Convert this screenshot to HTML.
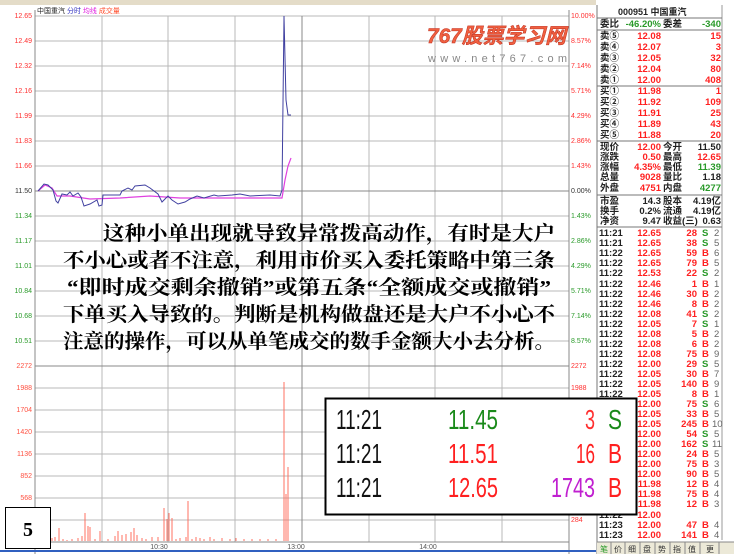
<!DOCTYPE html>
<html><head><meta charset="utf-8"><style>
html,body{margin:0;padding:0;background:#fff;}
svg{display:block;}
.l{font-family:"Liberation Sans",sans-serif;font-size:7px;}
.p{font-family:"Liberation Sans","Noto Sans CJK SC",sans-serif;font-size:9.5px;font-weight:bold;}
.c{font-family:"Liberation Serif","Noto Serif CJK SC",serif;font-size:20px;font-weight:bold;}
.b{font-family:"Liberation Sans Narrow","Liberation Sans",sans-serif;font-size:28px;}
</style></head><body>
<svg width="734" height="554" viewBox="0 0 734 554" xmlns="http://www.w3.org/2000/svg">
<rect x="0" y="0" width="734" height="554" fill="#fff"/>
<rect x="0" y="0" width="734" height="5" fill="#e4dcc8"/>
<g stroke="#b8b8b8" stroke-width="1">
<line x1="35" y1="16" x2="569" y2="16"/><line x1="35" y1="41" x2="569" y2="41"/><line x1="35" y1="66" x2="569" y2="66"/><line x1="35" y1="91" x2="569" y2="91"/><line x1="35" y1="116" x2="569" y2="116"/><line x1="35" y1="141" x2="569" y2="141"/><line x1="35" y1="166" x2="569" y2="166"/>
<line x1="35" y1="216" x2="569" y2="216"/><line x1="35" y1="241" x2="569" y2="241"/><line x1="35" y1="266" x2="569" y2="266"/><line x1="35" y1="291" x2="569" y2="291"/><line x1="35" y1="316" x2="569" y2="316"/><line x1="35" y1="341" x2="569" y2="341"/>
<line x1="35" y1="388" x2="569" y2="388"/><line x1="35" y1="410" x2="569" y2="410"/><line x1="35" y1="432" x2="569" y2="432"/><line x1="35" y1="454" x2="569" y2="454"/><line x1="35" y1="476" x2="569" y2="476"/><line x1="35" y1="498" x2="569" y2="498"/><line x1="35" y1="520" x2="569" y2="520"/>
<line x1="102" y1="16" x2="102" y2="542"/><line x1="168" y1="16" x2="168" y2="542"/><line x1="235" y1="16" x2="235" y2="542"/><line x1="369" y1="16" x2="369" y2="542"/><line x1="435" y1="16" x2="435" y2="542"/><line x1="502" y1="16" x2="502" y2="542"/>
</g>
<g stroke="#888" stroke-width="1">
<line x1="35" y1="191" x2="569" y2="191"/><line x1="35" y1="366" x2="569" y2="366"/><line x1="35" y1="542" x2="569" y2="542"/>
<line x1="302" y1="16" x2="302" y2="542"/>
<line x1="35" y1="10" x2="35" y2="554"/><line x1="569" y1="10" x2="569" y2="554"/>
</g>
<line x1="0" y1="551" x2="600" y2="551" stroke="#3060c0" stroke-width="2"/>
<g class="l" fill="#ff3030" text-anchor="end">
<text x="32" y="18">12.65</text><text x="32" y="43">12.49</text><text x="32" y="68">12.32</text><text x="32" y="93">12.16</text><text x="32" y="118">11.99</text><text x="32" y="143">11.83</text><text x="32" y="168">11.66</text>
</g>
<text class="l" x="32" y="193" text-anchor="end" fill="#333">11.50</text>
<g class="l" fill="#2a9a2a" text-anchor="end">
<text x="32" y="218">11.34</text><text x="32" y="243">11.17</text><text x="32" y="268">11.01</text><text x="32" y="293">10.84</text><text x="32" y="318">10.68</text><text x="32" y="343">10.51</text>
</g>
<g class="l" fill="#ff5040" text-anchor="end">
<text x="32" y="368">2272</text><text x="32" y="390">1988</text><text x="32" y="412">1704</text><text x="32" y="434">1420</text><text x="32" y="456">1136</text><text x="32" y="478">852</text><text x="32" y="500">568</text>
</g>
<g class="l" fill="#ff3030">
<text x="571" y="18">10.00%</text><text x="571" y="43">8.57%</text><text x="571" y="68">7.14%</text><text x="571" y="93">5.71%</text><text x="571" y="118">4.29%</text><text x="571" y="143">2.86%</text><text x="571" y="168">1.43%</text>
<text x="571" y="368">2272</text><text x="571" y="390">1988</text><text x="571" y="522">284</text>
</g>
<text class="l" x="571" y="193" fill="#333">0.00%</text>
<g class="l" fill="#2a9a2a">
<text x="571" y="218">1.43%</text><text x="571" y="243">2.86%</text><text x="571" y="268">4.29%</text><text x="571" y="293">5.71%</text><text x="571" y="318">7.14%</text><text x="571" y="343">8.57%</text>
</g>
<g class="l" fill="#555" text-anchor="middle"><text x="159" y="549">10:30</text><text x="296" y="549">13:00</text><text x="428" y="549">14:00</text></g>
<text x="37" y="13" class="l" font-family="Liberation Sans,Noto Sans CJK SC,sans-serif"><tspan fill="#222">中国重汽</tspan> <tspan fill="#3030c0">分时</tspan> <tspan fill="#e020e0">均线</tspan> <tspan fill="#ff5030">成交量</tspan></text>
<text x="427" y="43" font-family="Liberation Sans,Noto Sans CJK SC,sans-serif" font-size="21" font-weight="bold" font-style="italic" fill="#f06040" stroke="#c03020" stroke-width="0.5" textLength="139" lengthAdjust="spacingAndGlyphs">767股票学习网</text>
<text x="428" y="62" font-family="Liberation Sans,sans-serif" font-size="11" fill="#888" textLength="139" lengthAdjust="spacing">www.net767.com</text>
<polyline fill="none" stroke="#e040e0" stroke-width="1.2" points="38,191 45,185 52,188 57,196 70,196 90,199 120,198 150,196 180,198 250,198 282,198 285,180 288,166 291,158"/>
<polyline fill="none" stroke="#4040a0" stroke-width="1" points="38,191 44,184 48,185 53,190 56,201 58,203 62,194 67,195 70,192 73,196 78,193 81,197 84,206 90,204 97,200 99,206 102,205 103,195 120,195 122,191 128,188 132,190 135,186 145,185 150,188 158,194 162,202 168,196 172,200 178,204 185,202 190,199 197,196 204,198 214,195 218,196 232,195 240,194 250,196 270,195 280,196 282,190 284,16 286,100 288,115 291,115"/>
<g stroke="#ff7060" stroke-width="1">
<path d="M52 541V538M55 541V537M59 541V528M63 541V539M67 541V540M72 541V539M78 541V538M82 541V536M85 541V513M88 541V526M90 541V527M95 541V539M100 541V531M108 541V539M115 541V536M118 541V531M122 541V535M126 541V534M131 541V532M134 541V528M137 541V535M142 541V538M146 541V539M152 541V537M158 541V537M164 541V508M167 541V519M169 541V513M172 541V518M176 541V539M180 541V538M186 541V537M188 541V501M192 541V539M196 541V537M200 541V538M204 541V539M210 541V537M214 541V539M222 541V538M230 541V539M236 541V538M244 541V539M252 541V539M260 541V539M268 541V539M276 541V539M284 541V382M286 541V494M288 541V467"/>
</g>
<rect x="596" y="0" width="138" height="554" fill="#fff"/>
<line x1="597" y1="5" x2="597" y2="554" stroke="#777"/>
<line x1="722" y1="5" x2="722" y2="540" stroke="#999"/>
<g stroke="#777">
<line x1="597" y1="18" x2="722" y2="18"/><line x1="597" y1="30" x2="722" y2="30"/><line x1="597" y1="86" x2="722" y2="86"/><line x1="597" y1="141" x2="722" y2="141"/><line x1="597" y1="195" x2="722" y2="195"/><line x1="597" y1="227" x2="722" y2="227"/>
</g>
<g class="p">
<text x="618" y="15" fill="#222" font-size="9">000951 中国重汽</text>
<text x="600" y="27" fill="#222">委比</text><text x="661" y="27" fill="#2a9a2a" text-anchor="end">-46.20%</text><text x="663" y="27" fill="#222">委差</text><text x="721" y="27" fill="#2a9a2a" text-anchor="end">-340</text>
</g>
<g class="p" fill="#222">
<text x="600" y="39">卖⑤</text><text x="600" y="50">卖④</text><text x="600" y="61">卖③</text><text x="600" y="72">卖②</text><text x="600" y="83">卖①</text>
<text x="600" y="94">买①</text><text x="600" y="105">买②</text><text x="600" y="116">买③</text><text x="600" y="127">买④</text><text x="600" y="138">买⑤</text>
<text x="600" y="150">现价</text><text x="600" y="160">涨跌</text><text x="600" y="170">涨幅</text><text x="600" y="180">总量</text><text x="600" y="191">外盘</text>
<text x="663" y="150">今开</text><text x="663" y="160">最高</text><text x="663" y="170">最低</text><text x="663" y="180">量比</text><text x="663" y="191">内盘</text>
<text x="600" y="204">市盈</text><text x="600" y="214">换手</text><text x="600" y="224">净资</text>
<text x="663" y="204">股本</text><text x="663" y="214">流通</text><text x="663" y="224">收益(三)</text>
</g>
<g class="p" fill="#ff2020" text-anchor="end">
<text x="661" y="39">12.08</text><text x="661" y="50">12.07</text><text x="661" y="61">12.05</text><text x="661" y="72">12.04</text><text x="661" y="83">12.00</text>
<text x="661" y="94">11.98</text><text x="661" y="105">11.92</text><text x="661" y="116">11.91</text><text x="661" y="127">11.89</text><text x="661" y="138">11.88</text>
<text x="721" y="39">15</text><text x="721" y="50">3</text><text x="721" y="61">32</text><text x="721" y="72">80</text><text x="721" y="83">408</text>
<text x="721" y="94">1</text><text x="721" y="105">109</text><text x="721" y="116">25</text><text x="721" y="127">43</text><text x="721" y="138">20</text>
<text x="661" y="150">12.00</text><text x="661" y="160">0.50</text><text x="661" y="170">4.35%</text><text x="661" y="180">9028</text><text x="661" y="191">4751</text>
<text x="721" y="160">12.65</text>
</g>
<g class="p" text-anchor="end">
<text x="721" y="150" fill="#222">11.50</text><text x="721" y="170" fill="#2a9a2a">11.39</text><text x="721" y="180" fill="#222">1.18</text><text x="721" y="191" fill="#2a9a2a">4277</text>
<text x="661" y="204" fill="#222">14.3</text><text x="661" y="214" fill="#222">0.2%</text><text x="661" y="224" fill="#222">9.47</text>
<text x="721" y="204" fill="#222">4.19亿</text><text x="721" y="214" fill="#222">4.19亿</text><text x="721" y="224" fill="#222">0.63</text>
</g>
<g class="p" font-size="9">
<g fill="#222">
<text x="599" y="236">11:21</text><text x="599" y="246">11:21</text><text x="599" y="256">11:22</text><text x="599" y="266">11:22</text><text x="599" y="276">11:22</text><text x="599" y="287">11:22</text><text x="599" y="297">11:22</text><text x="599" y="307">11:22</text><text x="599" y="317">11:22</text><text x="599" y="327">11:22</text><text x="599" y="337">11:22</text><text x="599" y="347">11:22</text><text x="599" y="357">11:22</text><text x="599" y="367">11:22</text><text x="599" y="377">11:22</text><text x="599" y="387">11:22</text><text x="599" y="397">11:22</text><text x="599" y="407">11:22</text><text x="599" y="417">11:22</text><text x="599" y="427">11:22</text><text x="599" y="437">11:22</text><text x="599" y="447">11:22</text><text x="599" y="457">11:22</text><text x="599" y="467">11:22</text><text x="599" y="477">11:22</text><text x="599" y="487">11:22</text><text x="599" y="497">11:22</text><text x="599" y="507">11:22</text><text x="599" y="518">11:22</text><text x="599" y="528">11:23</text><text x="599" y="538">11:23</text>
</g>
<g fill="#ff2020" text-anchor="end">
<text x="661" y="236">12.65</text><text x="661" y="246">12.65</text><text x="661" y="256">12.65</text><text x="661" y="266">12.65</text><text x="661" y="276">12.53</text><text x="661" y="287">12.46</text><text x="661" y="297">12.46</text><text x="661" y="307">12.46</text><text x="661" y="317">12.08</text><text x="661" y="327">12.05</text><text x="661" y="337">12.08</text><text x="661" y="347">12.08</text><text x="661" y="357">12.08</text><text x="661" y="367">12.00</text><text x="661" y="377">12.05</text><text x="661" y="387">12.05</text><text x="661" y="397">12.05</text><text x="661" y="407">12.00</text><text x="661" y="417">12.05</text><text x="661" y="427">12.05</text><text x="661" y="437">12.00</text><text x="661" y="447">12.00</text><text x="661" y="457">12.00</text><text x="661" y="467">12.00</text><text x="661" y="477">12.00</text><text x="661" y="487">11.98</text><text x="661" y="497">11.98</text><text x="661" y="507">11.98</text><text x="661" y="518">12.00</text><text x="661" y="528">12.00</text><text x="661" y="538">12.00</text>
<text x="697" y="236">28</text><text x="697" y="246">38</text><text x="697" y="256">59</text><text x="697" y="266">79</text><text x="697" y="276">22</text><text x="697" y="287">1</text><text x="697" y="297">30</text><text x="697" y="307">8</text><text x="697" y="317">41</text><text x="697" y="327">7</text><text x="697" y="337">5</text><text x="697" y="347">6</text><text x="697" y="357">75</text><text x="697" y="367">29</text><text x="697" y="377">30</text><text x="697" y="387">140</text><text x="697" y="397">8</text><text x="697" y="407">75</text><text x="697" y="417">33</text><text x="697" y="427">245</text><text x="697" y="437">54</text><text x="697" y="447">162</text><text x="697" y="457">24</text><text x="697" y="467">75</text><text x="697" y="477">90</text><text x="697" y="487">12</text><text x="697" y="497">75</text><text x="697" y="507">12</text><text x="697" y="528">47</text><text x="697" y="538">141</text>
</g>
<g>
<text x="702" y="236" fill="#2a9a2a">S</text><text x="702" y="246" fill="#2a9a2a">S</text><text x="702" y="256" fill="#ff2020">B</text><text x="702" y="266" fill="#ff2020">B</text><text x="702" y="276" fill="#2a9a2a">S</text><text x="702" y="287" fill="#ff2020">B</text><text x="702" y="297" fill="#ff2020">B</text><text x="702" y="307" fill="#ff2020">B</text><text x="702" y="317" fill="#2a9a2a">S</text><text x="702" y="327" fill="#2a9a2a">S</text><text x="702" y="337" fill="#ff2020">B</text><text x="702" y="347" fill="#ff2020">B</text><text x="702" y="357" fill="#ff2020">B</text><text x="702" y="367" fill="#2a9a2a">S</text><text x="702" y="377" fill="#ff2020">B</text><text x="702" y="387" fill="#ff2020">B</text><text x="702" y="397" fill="#ff2020">B</text><text x="702" y="407" fill="#2a9a2a">S</text><text x="702" y="417" fill="#ff2020">B</text><text x="702" y="427" fill="#ff2020">B</text><text x="702" y="437" fill="#2a9a2a">S</text><text x="702" y="447" fill="#2a9a2a">S</text><text x="702" y="457" fill="#ff2020">B</text><text x="702" y="467" fill="#ff2020">B</text><text x="702" y="477" fill="#ff2020">B</text><text x="702" y="487" fill="#ff2020">B</text><text x="702" y="497" fill="#ff2020">B</text><text x="702" y="507" fill="#ff2020">B</text><text x="702" y="528" fill="#ff2020">B</text><text x="702" y="538" fill="#ff2020">B</text>
</g>
<g fill="#666" font-weight="normal">
<text x="714" y="236">2</text><text x="714" y="246">5</text><text x="714" y="256">6</text><text x="714" y="266">5</text><text x="714" y="276">2</text><text x="714" y="287">1</text><text x="714" y="297">2</text><text x="714" y="307">2</text><text x="714" y="317">2</text><text x="714" y="327">1</text><text x="714" y="337">2</text><text x="714" y="347">2</text><text x="714" y="357">9</text><text x="714" y="367">5</text><text x="714" y="377">7</text><text x="714" y="387">9</text><text x="714" y="397">1</text><text x="714" y="407">6</text><text x="714" y="417">5</text><text x="712" y="427">10</text><text x="714" y="437">5</text><text x="712" y="447">11</text><text x="714" y="457">5</text><text x="714" y="467">3</text><text x="714" y="477">5</text><text x="714" y="487">4</text><text x="714" y="497">4</text><text x="714" y="507">3</text><text x="714" y="528">4</text><text x="714" y="538">4</text>
</g>
</g>
<rect x="597" y="542" width="137" height="12" fill="#ece9d8"/>
<g stroke="#888"><line x1="597" y1="542" x2="734" y2="542"/><line x1="611" y1="542" x2="611" y2="554"/><line x1="625" y1="542" x2="625" y2="554"/><line x1="640" y1="542" x2="640" y2="554"/><line x1="655" y1="542" x2="655" y2="554"/><line x1="670" y1="542" x2="670" y2="554"/><line x1="685" y1="542" x2="685" y2="554"/><line x1="700" y1="542" x2="700" y2="554"/><line x1="719" y1="542" x2="719" y2="554"/></g>
<g font-family="Noto Sans CJK SC,sans-serif" font-size="8" fill="#333"><text x="600" y="552" fill="#2a9a2a">笔</text><text x="614" y="552">价</text><text x="628" y="552">细</text><text x="643" y="552">盘</text><text x="658" y="552">势</text><text x="673" y="552">指</text><text x="688" y="552">值</text><text x="706" y="552">更</text></g>
<g class="c" fill="#000">
<text x="103" y="240" textLength="452" lengthAdjust="spacingAndGlyphs">这种小单出现就导致异常拨高动作，有时是大户</text>
<text x="63" y="267" textLength="492" lengthAdjust="spacingAndGlyphs">不小心或者不注意，利用市价买入委托策略中第三条</text>
<text x="67" y="294" textLength="484" lengthAdjust="spacingAndGlyphs">“即时成交剩余撤销”或第五条“全额成交或撤销”</text>
<text x="63" y="321" textLength="492" lengthAdjust="spacingAndGlyphs">下单买入导致的。判断是机构做盘还是大户不小心不</text>
<text x="63" y="348" textLength="492" lengthAdjust="spacingAndGlyphs">注意的操作，可以从单笔成交的数手金额大小去分析。</text>
</g>
<rect x="325.5" y="398.5" width="311" height="116" fill="#fff" stroke="#000" stroke-width="2"/>
<g class="b">
<text x="336" y="429" fill="#111" textLength="46" lengthAdjust="spacingAndGlyphs">11:21</text><text x="336" y="463" fill="#111" textLength="46" lengthAdjust="spacingAndGlyphs">11:21</text><text x="336" y="497" fill="#111" textLength="46" lengthAdjust="spacingAndGlyphs">11:21</text>
<text x="448" y="429" fill="#1a8a1a" textLength="50" lengthAdjust="spacingAndGlyphs">11.45</text><text x="448" y="463" fill="#ff2020" textLength="50" lengthAdjust="spacingAndGlyphs">11.51</text><text x="448" y="497" fill="#ff2020" textLength="50" lengthAdjust="spacingAndGlyphs">12.65</text>
<text x="585" y="429" fill="#ff3030" textLength="10" lengthAdjust="spacingAndGlyphs">3</text><text x="576" y="463" fill="#ff2020" textLength="19" lengthAdjust="spacingAndGlyphs">16</text><text x="551" y="497" fill="#c020d0" textLength="44" lengthAdjust="spacingAndGlyphs">1743</text>
<text x="608" y="429" fill="#1a8a1a" textLength="14" lengthAdjust="spacingAndGlyphs">S</text><text x="608" y="463" fill="#ff2020" textLength="14" lengthAdjust="spacingAndGlyphs">B</text><text x="608" y="497" fill="#ff2020" textLength="14" lengthAdjust="spacingAndGlyphs">B</text>
</g>
<rect x="5.5" y="507.5" width="45" height="41" fill="#fff" stroke="#000" stroke-width="1"/>
<text x="28" y="536" text-anchor="middle" font-family="Liberation Serif,serif" font-size="20" font-weight="bold">5</text>
</svg>
</body></html>
